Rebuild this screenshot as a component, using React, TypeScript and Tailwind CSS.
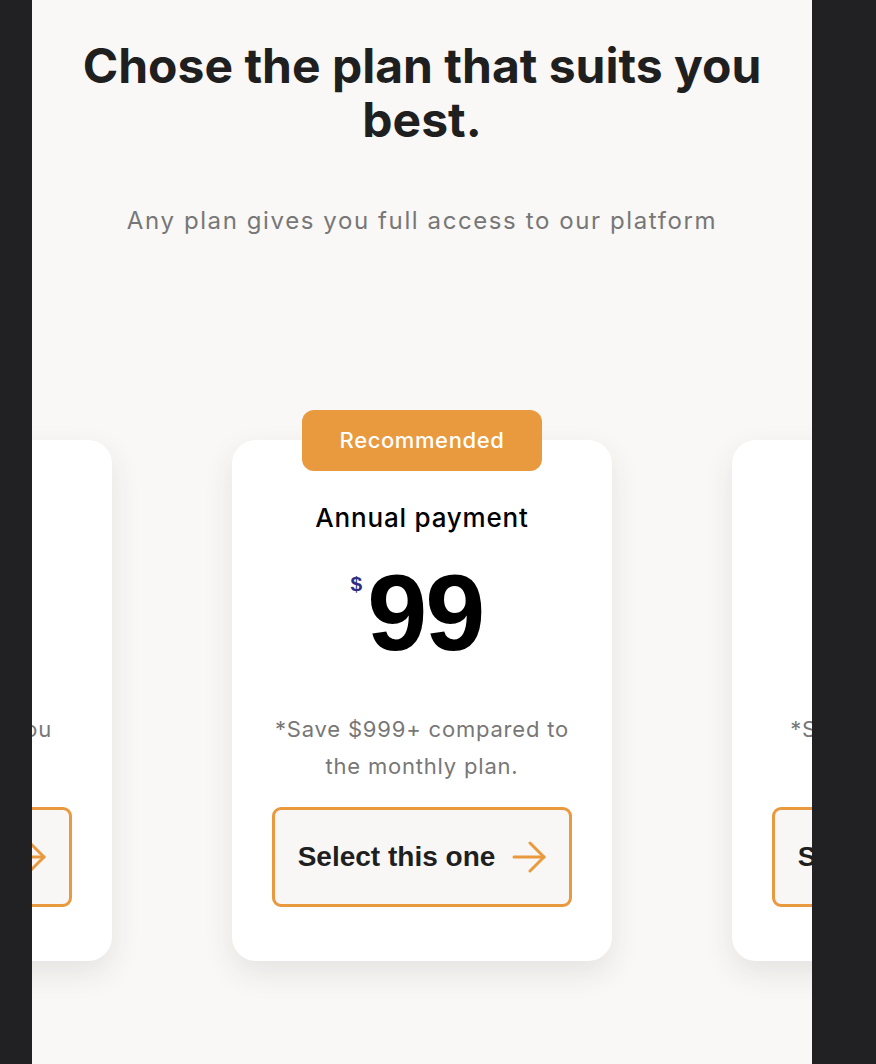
import React from "react";

type Plan = {
  title: string;
  price: string;
  note: string;
  recommended?: boolean;
};

const plans: Plan[] = [
  { title: "Pay monthly", price: "9", note: "*Cancel anytime, if you want." },
  { title: "Annual payment", price: "99", note: "*Save $999+ compared to the monthly plan.", recommended: true },
  { title: "Lifetime", price: "299", note: "*Save even more with a lifetime plan." },
];

const Arrow = () => (
  <svg width="34" height="32" viewBox="0 0 34 32" fill="none" stroke="#e9993e" strokeWidth="3" strokeLinecap="round" strokeLinejoin="round">
    <path d="M2 16H32" />
    <path d="M18 2L32 16L18 30" />
  </svg>
);

const PlanCard = ({ plan }: { plan: Plan }) => (
  <div className="relative w-[380px] shrink-0 rounded-[24px] bg-white pt-[62px] pb-[54px] px-[35px] flex flex-col items-center shadow-[0_12px_30px_rgba(60,50,40,0.10)]">
    {plan.recommended && (
      <div className="absolute -top-[30px] left-1/2 -translate-x-1/2 w-[240px] h-[61px] rounded-[12px] bg-[#e9993e] flex items-center justify-center text-white text-[22px] tracking-[0.6px] font-['Inter',sans-serif] font-medium">
        Recommended
      </div>
    )}
    <h3 className="text-[26px] leading-[32px] text-black font-['Inter',sans-serif] font-medium tracking-[0.8px]">
      {plan.title}
    </h3>
    <div className="mt-[25px] mr-[10px] flex items-start font-['Liberation_Sans',Arial,sans-serif]">
      <span className="mt-[14px] mr-[5px] text-[21px] leading-[22px] font-bold text-[#2d2e83]">$</span>
      <span className="text-[108px] leading-none font-bold text-black tracking-[-2px]">{plan.price}</span>
    </div>
    <p className="mt-[44px] w-[310px] min-h-[74px] text-center text-[22px] leading-[37px] tracking-[0.8px] text-[#777777] font-['Inter',sans-serif]">
      {plan.note}
    </p>
    <button className="mt-[22px] w-[300px] h-[100px] shrink-0 rounded-[9px] border-[3px] border-[#e9993e] bg-[#f8f7f5] flex items-center justify-center gap-[17px]">
      <span className="text-[28px] font-bold text-[#1f1f1f] font-['Liberation_Sans',Arial,sans-serif] whitespace-nowrap">Select this one</span>
      <Arrow />
    </button>
  </div>
);

export default function App() {
  return (
    <div className="min-h-screen bg-[#212123] pl-[32px]">
      <div className="w-[780px] h-[1064px] bg-[#f9f8f6] overflow-hidden flex flex-col items-center">
        <h1 className="pt-[39px] px-[40px] text-center text-[48px] leading-[54px] font-bold text-[#1f1f1f] font-['Inter',sans-serif]">
          Chose the plan that suits you best.
        </h1>
        <p className="mt-[58px] text-center text-[24px] leading-[32px] tracking-[1.6px] text-[#777777] font-['Inter',sans-serif]">
          Any plan gives you full access to our platform
        </p>
        <div className="mt-[203px] w-full flex justify-center gap-[120px]">
          {plans.map((p) => (
            <PlanCard key={p.title} plan={p} />
          ))}
        </div>
      </div>
    </div>
  );
}
